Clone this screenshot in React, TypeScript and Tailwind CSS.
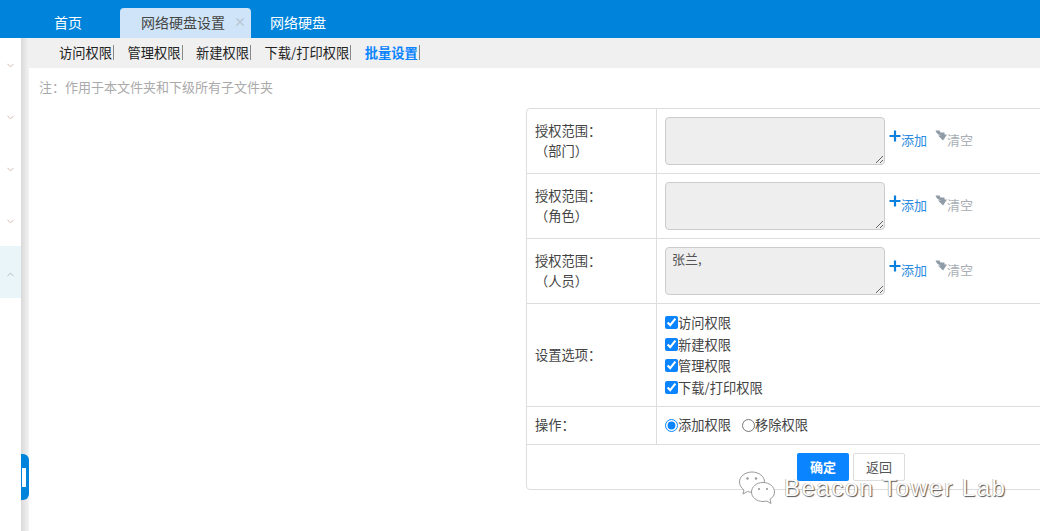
import { ChevronDown, ChevronUp } from 'lucide-react';

const COLON = '\uFF1A';
const navItems = ['访问权限', '管理权限', '新建权限', '下载/打印权限'];
const scopes = [
  { label: '\uFF08部门\uFF09', value: '' },
  { label: '\uFF08角色\uFF09', value: '' },
  { label: '\uFF08人员\uFF09', value: '张兰,' },
];
const options = ['访问权限', '新建权限', '管理权限', '下载/打印权限'];

function ClearIcon() {
  return (
    <svg className="w-[12px] h-[12px] shrink-0 mb-[6px]" viewBox="0 0 12 12">
      <path d="M0.5 0.5 L4.5 0.5 L5.5 2.5 L9.5 2.5 L9.5 4.5 L12 4.5 L8 10.5 L3 5.5 L6 5.2 C3.5 5 1.5 3.5 0.5 0.5 Z" fill="#8f9ca7" />
    </svg>
  );
}

function PlusIcon() {
  return (
    <svg className="w-[12px] h-[12px] shrink-0 mb-[6px]" viewBox="0 0 12 12">
      <path d="M6 0.5 V11.5 M0.5 6 H11.5" stroke="#0a7fdc" strokeWidth="2.2" fill="none" />
    </svg>
  );
}

function WechatIcon() {
  return (
    <svg className="w-[38px] h-[34px]" viewBox="0 0 38 34" fill="#ffffff" stroke="#9a9a9a" strokeWidth="1">
      <path d="M14 1 C7 1 1.5 5.5 1.5 11 C1.5 14.5 3.5 17 6 19 L5 23 L9.5 20.5 C11 21 12.5 21.2 14 21.2 C21 21.2 26.5 16.5 26.5 11 C26.5 5.5 21 1 14 1 Z" />
      <path d="M25 11.5 C18.5 11.5 13.5 15.8 13.5 21 C13.5 26.2 18.5 30.5 25 30.5 C26.2 30.5 27.5 30.3 28.6 30 L33 32.5 L32 28.3 C34.8 26.5 36.5 24 36.5 21 C36.5 15.8 31.5 11.5 25 11.5 Z" />
      <circle cx="9.5" cy="7.5" r="1.2" fill="#999" stroke="none" />
      <circle cx="18" cy="7.5" r="1.2" fill="#999" stroke="none" />
      <circle cx="21" cy="18" r="1.1" fill="#999" stroke="none" />
      <circle cx="29" cy="18" r="1.1" fill="#999" stroke="none" />
    </svg>
  );
}

export default function App() {
  return (
    <div className="relative flex flex-col w-[1040px] h-[531px] overflow-hidden bg-white text-[14px] text-[#444] font-['Noto_Sans_CJK_SC','Liberation_Sans',sans-serif]">
      <header className="flex items-end h-[38px] shrink-0 bg-[#0084db] text-white">
        <div className="w-[120px] h-[30px] pl-[54px] leading-[28px]">首页</div>
        <div className="flex items-center w-[131px] h-[30px] pl-[21px] pb-[2px] rounded-t-[4px] bg-[#cfe4f8] text-[#444]">
          <span>网络硬盘设置</span>
          <span className="ml-[9px] text-[12px] font-bold leading-none text-[#b9c6d2]">×</span>
        </div>
        <div className="h-[30px] pl-[19px] leading-[28px]">网络硬盘</div>
      </header>

      <div className="flex flex-1 min-h-0">
        <aside className="flex flex-col w-[21px] shrink-0 bg-white">
          {[0, 1, 2, 3].map((i) => (
            <div key={i} className="flex items-center justify-center h-[52px] pt-[2px]">
              <ChevronDown size={11} strokeWidth={2} className="text-[#d0b3a3]" />
            </div>
          ))}
          <div className="flex items-center justify-center h-[52px] pt-[4px] bg-[#e9f5f8]">
            <ChevronUp size={11} strokeWidth={2} className="text-[#b0b8bc]" />
          </div>
        </aside>
        <div className="w-[8px] shrink-0 bg-gradient-to-r from-[#d9d9d9] to-[#f3f3f3]" />

        <main className="flex-1 min-w-0">
          <nav className="flex items-center h-[30px] pl-[30px] pb-[2px] bg-[#f0f0f0] text-[13.25px] text-[#222]">
            {navItems.map((item) => (
              <span key={item} className="mr-[13.5px] pr-[1px] border-r border-[#888] leading-[15px]">
                {item}
              </span>
            ))}
            <span className="pr-[1px] border-r border-[#888] leading-[15px] font-bold text-[#0a84ff]">批量设置</span>
          </nav>

          <p className="h-[40px] pl-[10px] text-[13px] leading-[38px] text-[#aaa]">注{COLON}作用于本文件夹和下级所有子文件夹</p>

          <div className="ml-[497px] w-[530px] border border-[#ddd] rounded-l-[4px] text-[13.25px]">
            {scopes.map((scope) => (
              <div key={scope.label} className="flex h-[65px] border-b border-[#ddd]">
                <div className="flex flex-col justify-center w-[130px] shrink-0 pl-[8px] border-r border-[#ddd] leading-[20px]">
                  <span>授权范围{COLON}</span>
                  <span>{scope.label}</span>
                </div>
                <div className="flex items-start pl-[8px] pt-[8px]">
                  <textarea
                    readOnly
                    value={scope.value}
                    className="block w-[220px] h-[48px] px-[6px] py-[1px] rounded-[4px] border border-[#ccc] bg-[#eee] text-[13px] text-[#555] outline-none"
                  />
                  <span className="flex items-center ml-[4px] mt-[12px] h-[20px] text-[13px] text-[#2a8ae0]">
                    <PlusIcon />
                    <span className="mt-[1px]">添加</span>
                  </span>
                  <span className="flex items-center ml-[8px] mt-[12px] h-[20px] text-[13px] text-[#a8aeb4]">
                    <ClearIcon />
                    <span className="mt-[1px]">清空</span>
                  </span>
                </div>
              </div>
            ))}

            <div className="flex h-[103px] border-b border-[#ddd]">
              <div className="flex items-center w-[130px] shrink-0 pl-[8px] border-r border-[#ddd]">设置选项{COLON}</div>
              <div className="flex flex-col justify-center pl-[8px] leading-[21.5px]">
                {options.map((option) => (
                  <label key={option} className="flex items-center">
                    <input type="checkbox" defaultChecked className="w-[13px] h-[13px] accent-[#0a84ff]" />
                    <span>{option}</span>
                  </label>
                ))}
              </div>
            </div>

            <div className="flex h-[38px] border-b border-[#ddd]">
              <div className="flex items-center w-[130px] shrink-0 pl-[8px] pb-[2px] border-r border-[#ddd]">操作{COLON}</div>
              <div className="flex items-center pl-[8px] pb-[1px]">
                <label className="flex items-center">
                  <input type="radio" name="op" defaultChecked className="w-[13px] h-[13px] accent-[#0a84ff]" />
                  <span>添加权限</span>
                </label>
                <label className="flex items-center ml-[11px]">
                  <input type="radio" name="op" className="w-[13px] h-[13px] accent-[#0a84ff]" />
                  <span>移除权限</span>
                </label>
              </div>
            </div>

            <div className="flex items-start h-[44px] pt-[8px] pl-[270px] gap-[4px]">
              <button className="w-[52px] h-[28px] rounded-[2px] bg-[#0a84ff] text-white font-semibold text-[13px] leading-[14px]">确定</button>
              <button className="w-[52px] h-[28px] rounded-[2px] border border-[#ddd] bg-white text-[13px] leading-[14px] text-[#555]">返回</button>
            </div>
          </div>
        </main>
      </div>

      {/* collapse handle */}
      <div className="absolute left-[21px] top-[454px] flex items-center w-[8px] h-[46px] pl-[1px] rounded-r-[6px] bg-[#0084db]">
        <div className="w-[4px] h-[19px] bg-white" />
      </div>

      {/* watermark */}
      <div className="absolute left-[738px] top-[471px] flex items-center gap-[8px]">
        <WechatIcon />
        <span className="text-[24px] leading-none tracking-[1.5px] text-white font-['Liberation_Sans',sans-serif] [text-shadow:1px_1px_1px_#555,-0.5px_-0.5px_0.5px_#999]">
          Beacon Tower Lab
        </span>
      </div>
    </div>
  );
}
